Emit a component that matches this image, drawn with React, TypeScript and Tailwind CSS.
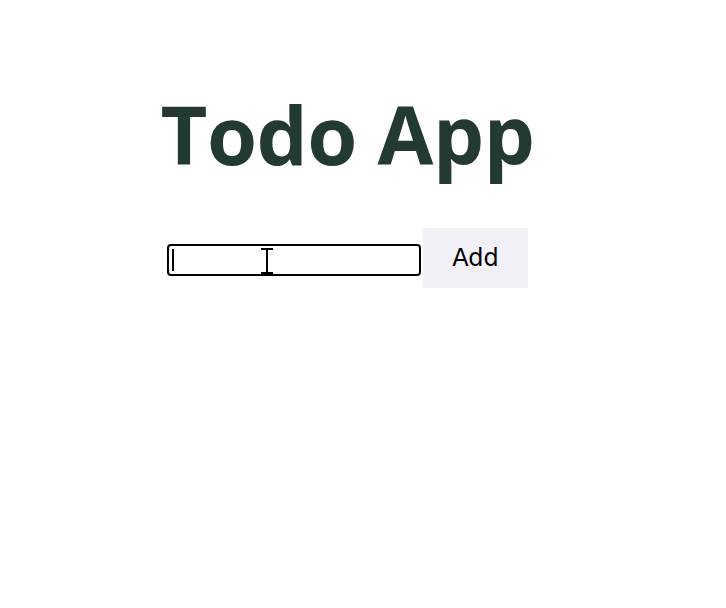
import React, { useState } from 'react';

const App: React.FC = () => {
  const [text, setText] = useState<string>('');

  return (
    <div className="min-h-[608px] w-full bg-[#fffffd]">
      <div className="flex w-[695px] flex-col items-center pt-[80px]">
        <h1
          className="text-[81px] font-bold leading-[108px] tracking-[-0.5px] text-[#233b2e]"
          style={{ fontFamily: '"Open Sans", "Noto Sans", sans-serif' }}
        >
          Todo App
        </h1>

        <div className="mt-[40px] flex items-start gap-[2px]">
          <div className="relative mt-[16px]">
            <input
              value={text}
              onChange={(e) => setText(e.target.value)}
              className="block h-[32px] w-[254px] rounded-[4px] border-2 border-black bg-white px-1 outline-none"
            />
            {/* text caret + mouse I-beam as seen in the shot */}
            <span className="pointer-events-none absolute left-[5px] top-[5px] h-[22px] w-[2px] bg-black" />
            <svg
              className="pointer-events-none absolute left-[93px] top-[4px]"
              width="14"
              height="26"
              viewBox="0 0 14 26"
            >
              <path d="M1 1h12M7 1v24M1 25h12" stroke="black" strokeWidth="2" fill="none" />
            </svg>
          </div>
          <button
            className="h-[60px] w-[105px] bg-[#f1f0f6] text-[24px] text-black"
            style={{ fontFamily: '"DejaVu Sans", Verdana, sans-serif' }}
          >
            Add
          </button>
        </div>
      </div>
    </div>
  );
};

export default App;
